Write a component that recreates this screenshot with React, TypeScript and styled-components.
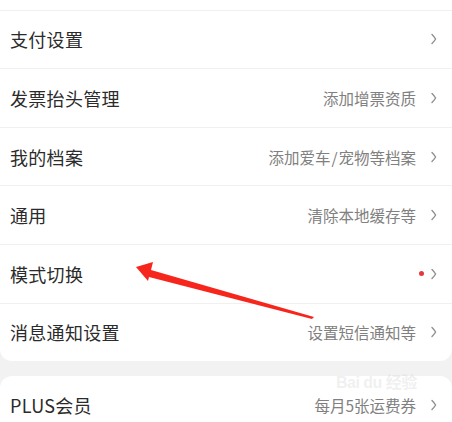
import React from "react";
import styled, { createGlobalStyle } from "styled-components";

const Global = createGlobalStyle`
  html, body { margin: 0; padding: 0; background: #f2f2f2; }
  body { font-family: "Noto Sans CJK SC", "Noto Sans", sans-serif; }
`;

const Page = styled.div`
  position: relative;
  width: 452px;
  height: 422px;
  overflow: hidden;
  background: #f2f2f2;
`;

const Card = styled.div<{ $top?: boolean }>`
  background: #fff;
  border-radius: ${(p) => (p.$top ? "12px 12px 0 0" : "0 0 12px 12px")};
  display: flex;
  flex-direction: column;
`;

const Gap = styled.div`
  height: 15px;
`;

const CutRow = styled.div`
  height: 9.6px;
  border-bottom: 1px solid #f0f0f0;
`;

const Row = styled.div<{ $last?: boolean }>`
  height: 57.6px;
  display: flex;
  align-items: center;
  padding: 0 15px 0 10px;
  border-bottom: ${(p) => (p.$last ? "none" : "1px solid #f0f0f0")};
  box-sizing: content-box;
`;

const Label = styled.span`
  flex: 1;
  font-size: 18px;
  color: #2b2b2b;
  letter-spacing: 0.3px;
`;

const Hint = styled.span`
  font-size: 15.5px;
  color: #808080;
  margin-right: 15px;
`;

const Dot = styled.span`
  width: 5px;
  height: 5px;
  border-radius: 50%;
  background: #e4393c;
  margin-right: 7px;
`;

const Chevron = () => (
  <svg width="6" height="12" viewBox="0 0 6 12">
    <path d="M1 1.5 Q3.5 4 4.6 6 Q3.5 8 1 10.5" fill="none" stroke="#8f8f8f" strokeWidth="1.4" strokeLinecap="round" strokeLinejoin="round" />
  </svg>
);

const Overlay = styled.svg`
  position: absolute;
  left: 0;
  top: 0;
  pointer-events: none;
`;

const Watermark = styled.div`
  position: absolute;
  left: 336px;
  top: 374px;
  font-family: "Liberation Sans", "Noto Sans CJK SC", sans-serif;
  font-size: 16px;
  line-height: 18px;
  color: rgba(205, 205, 205, 0.3);
  font-weight: bold;
  letter-spacing: -0.5px;
`;

type Item = { label: string; hint?: string; dot?: boolean };

const items: Item[] = [
  { label: "支付设置" },
  { label: "发票抬头管理", hint: "添加增票资质" },
  { label: "我的档案", hint: "添加爱车\u200A/\u200A宠物等档案" },
  { label: "通用", hint: "清除本地缓存等" },
  { label: "模式切换", dot: true },
  { label: "消息通知设置", hint: "设置短信通知等" },
];

export default function App() {
  return (
    <Page>
      <Global />
      <Card>
        <CutRow />
        {items.map((it, i) => (
          <Row key={it.label} $last={i === items.length - 1}>
            <Label>{it.label}</Label>
            {it.hint && <Hint>{it.hint}</Hint>}
            {it.dot && <Dot />}
            <Chevron />
          </Row>
        ))}
      </Card>
      <Gap />
      <Card $top>
        <Row $last>
          <Label>PLUS会员</Label>
          <Hint>每月5张运费券</Hint>
          <Chevron />
        </Row>
      </Card>
      <Watermark>Bai du 经验</Watermark>
      <Overlay width="452" height="422" viewBox="0 0 452 422">
        <polygon
          points="136,267 153,262 151,270 314,317 312,319 149,277 148,281"
          fill="#f7261c"
        />
      </Overlay>
    </Page>
  );
}
